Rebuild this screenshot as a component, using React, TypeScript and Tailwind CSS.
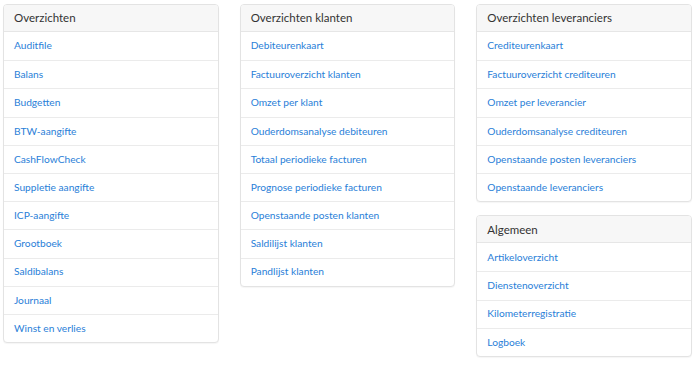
import React from 'react'

type Panel = { title: string; items: string[] }

const columns: Panel[][] = [
  [
    {
      title: 'Overzichten',
      items: [
        'Auditfile',
        'Balans',
        'Budgetten',
        'BTW-aangifte',
        'CashFlowCheck',
        'Suppletie aangifte',
        'ICP-aangifte',
        'Grootboek',
        'Saldibalans',
        'Journaal',
        'Winst en verlies',
      ],
    },
  ],
  [
    {
      title: 'Overzichten klanten',
      items: [
        'Debiteurenkaart',
        'Factuuroverzicht klanten',
        'Omzet per klant',
        'Ouderdomsanalyse debiteuren',
        'Totaal periodieke facturen',
        'Prognose periodieke facturen',
        'Openstaande posten klanten',
        'Saldilijst klanten',
        'Pandlijst klanten',
      ],
    },
  ],
  [
    {
      title: 'Overzichten leveranciers',
      items: [
        'Crediteurenkaart',
        'Factuuroverzicht crediteuren',
        'Omzet per leverancier',
        'Ouderdomsanalyse crediteuren',
        'Openstaande posten leveranciers',
        'Openstaande leveranciers',
      ],
    },
    {
      title: 'Algemeen',
      items: ['Artikeloverzicht', 'Dienstenoverzicht', 'Kilometerregistratie', 'Logboek'],
    },
  ],
]

function PanelBox({ panel }: { panel: Panel }) {
  return (
    <div className="rounded border border-[#e3e3e3] bg-white shadow-[0_1px_1px_rgba(0,0,0,0.04)] overflow-hidden">
      <div className="h-[27px] flex items-center px-[10px] bg-[#f7f7f7] border-b border-[#e6e6e6] text-[11.5px] font-normal text-[#333]">
        {panel.title}
      </div>
      {panel.items.map((item, i) => (
        <a
          key={item}
          href="#"
          className={`h-[28.2px] flex items-center px-[10px] text-[10.2px] text-[#2a80d8] ${
            i > 0 ? 'border-t border-[#ebebeb]' : ''
          }`}
        >
          {item}
        </a>
      ))}
    </div>
  )
}

export default function App() {
  return (
    <div className="w-[700px] h-[369px] bg-white pl-[3px] pt-[4px] pr-[8px] font-['Lato',sans-serif]">
      <div className="grid grid-cols-3 gap-[21px] items-start">
        {columns.map((col, ci) => (
          <div key={ci} className="flex flex-col gap-[13px]">
            {col.map((p) => (
              <PanelBox key={p.title} panel={p} />
            ))}
          </div>
        ))}
      </div>
    </div>
  )
}
